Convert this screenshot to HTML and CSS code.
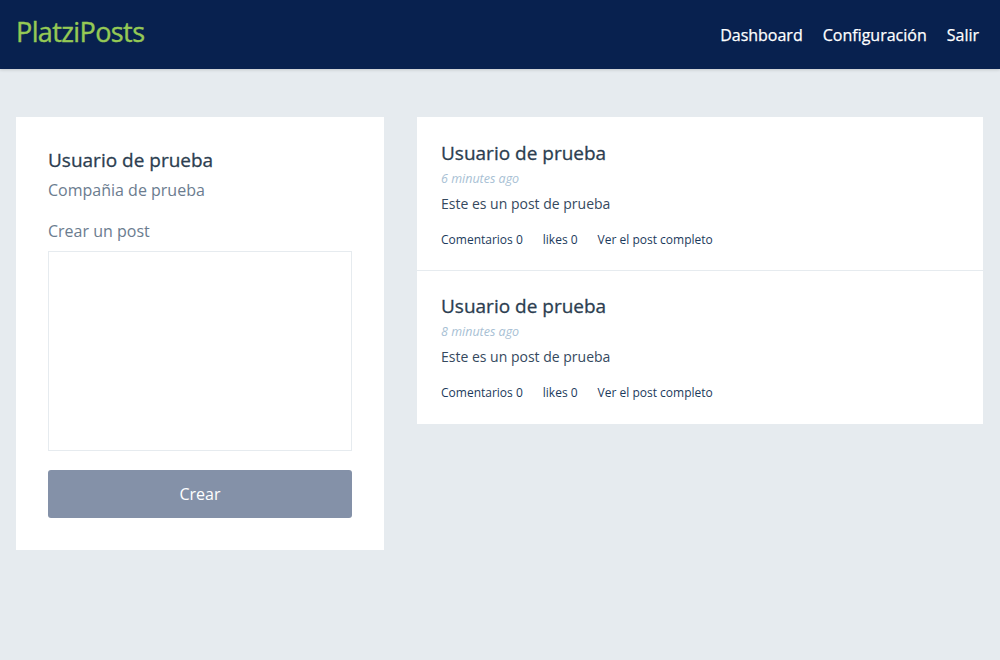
FILE: index.html
```html
<!DOCTYPE html>
<html lang="es">
<head>
<meta charset="utf-8">
<title>PlatziPosts</title>
<link rel="stylesheet" href="styles.css">
</head>
<body>
<header class="topbar">
  <div class="logo">PlatziPosts</div>
  <nav class="nav">
    <a class="nav-link">Dashboard</a>
    <a class="nav-link">Configuración</a>
    <a class="nav-link">Salir</a>
  </nav>
</header>
<main class="main">
  <section class="profile card">
    <h2 class="profile-name">Usuario de prueba</h2>
    <p class="profile-company">Compañia de prueba</p>
    <label class="create-label">Crear un post</label>
    <textarea class="create-text"></textarea>
    <button class="create-btn">Crear</button>
  </section>
  <section class="posts card">
    <article class="post">
      <h3 class="post-author">Usuario de prueba</h3>
      <div class="post-time">6 minutes ago</div>
      <p class="post-body">Este es un post de prueba</p>
      <div class="post-links">
        <a class="post-link">Comentarios 0</a>
        <a class="post-link">likes 0</a>
        <a class="post-link">Ver el post completo</a>
      </div>
    </article>
    <article class="post">
      <h3 class="post-author">Usuario de prueba</h3>
      <div class="post-time">8 minutes ago</div>
      <p class="post-body">Este es un post de prueba</p>
      <div class="post-links">
        <a class="post-link">Comentarios 0</a>
        <a class="post-link">likes 0</a>
        <a class="post-link">Ver el post completo</a>
      </div>
    </article>
  </section>
</main>
</body>
</html>
```
FILE: styles.css
```css
* { box-sizing: border-box; }
html, body { margin: 0; padding: 0; }
body {
  font-family: "Open Sans", "Liberation Sans", sans-serif;
  background: #e6ebef;
  color: #2c3e50;
  height: 660px;
}
.topbar {
  height: 69px;
  background: #08214f;
  display: flex;
  align-items: center;
  justify-content: space-between;
  padding: 0 21px 0 16px;
  box-shadow: 0 1px 3px rgba(0,0,0,0.15);
}
.logo {
  color: #95c955;
  font-size: 27px;
  letter-spacing: -0.6px;
  -webkit-text-stroke: 0.4px #95c955;
  margin-top: -6px;
}
.nav { display: flex; gap: 20px; margin-top: 1px; }
.nav-link {
  color: #ffffff;
  font-size: 16px;
  -webkit-text-stroke: 0.25px #ffffff;
}
.main {
  display: flex;
  align-items: flex-start;
  gap: 33px;
  padding: 48px 17px 0 16px;
}
.card { background: #fff; }
.profile {
  width: 368px;
  padding: 31px 32px 32px;
  display: flex;
  flex-direction: column;
}
.profile-name {
  margin: 0;
  font-size: 19px;
  font-weight: 400;
  line-height: 24px;
  color: #2c3e50;
  -webkit-text-stroke: 0.3px #2c3e50;
}
.profile-company {
  margin: 7px 0 0;
  font-size: 16px;
  line-height: 22px;
  color: #6b7c8f;
}
.create-label {
  margin-top: 19px;
  font-size: 16px;
  line-height: 22px;
  color: #6b7c8f;
}
.create-text {
  margin-top: 9px;
  width: 304px;
  height: 200px;
  border: 1px solid #e6ebef;
  resize: none;
  font-family: inherit;
}
.create-btn {
  margin-top: 19px;
  height: 48px;
  background: #8491a8;
  border: none;
  border-radius: 3px;
  color: #fff;
  font-family: inherit;
  font-size: 16px;
}
.posts {
  flex: 1;
  display: flex;
  flex-direction: column;
}
.post {
  padding: 23px 24px 0;
  height: 153px;
}
.post + .post { border-top: 1px solid #e6ebef; height: 154px; padding-top: 22px; }
.post-author {
  margin: 0;
  font-size: 19px;
  font-weight: 400;
  line-height: 26px;
  color: #2c3e50;
  -webkit-text-stroke: 0.3px #2c3e50;
}
.post-time {
  font-size: 12.5px;
  font-style: italic;
  color: #a8bfd4;
  line-height: 16px;
  margin-top: 5px;
}
.post-body {
  margin: 7px 0 0;
  font-size: 14px;
  line-height: 20px;
  color: #35495e;
}
.post-links {
  margin-top: 18px;
  display: flex;
  gap: 20px;
}
.post-link {
  font-size: 12px;
  color: #1b3a5c;
  line-height: 16px;
}
```
